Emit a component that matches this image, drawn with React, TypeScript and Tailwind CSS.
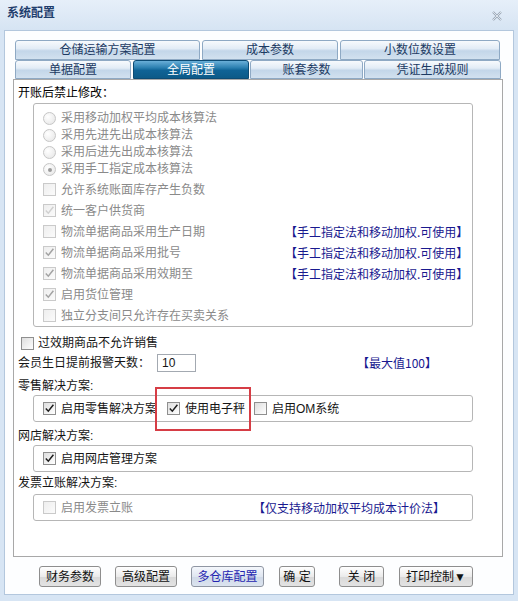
import React from "react";

const FONT = { fontFamily: '"Liberation Sans", "Noto Sans CJK SC", sans-serif' };
const CJK = { fontFamily: '"Noto Sans CJK SC", "Liberation Sans", sans-serif' };

function Check({ checked = false, disabled = false, faint = false }: { checked?: boolean; disabled?: boolean; faint?: boolean }) {
  return (
    <span
      className={
        disabled
          ? "w-[13px] h-[13px] shrink-0 border border-[#cacaca] bg-[linear-gradient(135deg,#eeeeee,#fbfbfb)] flex items-center justify-center"
          : "w-[13px] h-[13px] shrink-0 border border-[#8f8f8f] bg-[linear-gradient(135deg,#dedede,#ffffff)] flex items-center justify-center"
      }
    >
      {checked && (
        <svg width="11" height="11" viewBox="0 0 11 11">
          <path
            d="M1.8 5.6 L4.3 8.2 L9.4 1.8"
            fill="none"
            stroke={faint ? "#d0d0d0" : disabled ? "#a3a3a3" : "#1d1d1d"}
            strokeWidth="1.5"
          />
        </svg>
      )}
    </span>
  );
}

function Radio({ checked = false }: { checked?: boolean }) {
  return (
    <span className="w-[13px] h-[13px] shrink-0 rounded-full border border-[#c6c6c6] bg-[radial-gradient(circle_at_35%_35%,#ffffff,#e4e4e4)] flex items-center justify-center">
      {checked && <span className="w-[4px] h-[4px] rounded-full bg-[#9c9c9c]" />}
    </span>
  );
}

const NOTE = "【手工指定法和移动加权.可使用】";

function Tab({ label, w, active = false, h }: { label: string; w: number; active?: boolean; h: string }) {
  return (
    <div
      style={{ width: w }}
      className={
        active
          ? `${h} shrink-0 flex items-center justify-center rounded-t-[3px] border border-[#0c4b74] bg-[linear-gradient(to_bottom,#6aafd8_0%,#2a7fb0_40%,#0f6396_55%,#0c5a88_100%)] text-white text-[12px]`
          : `${h} shrink-0 flex items-center justify-center rounded-t-[3px] border border-[#8ea9c4] bg-[linear-gradient(to_bottom,#f7fafd_0%,#e2ecf6_42%,#c3d6e9_55%,#d2e1ef_100%)] text-[#1c3a62] text-[12px]`
      }
    >
      {label}
    </div>
  );
}

function Btn({ label, w, ml, blue = false }: { label: string; w: number; ml: number; blue?: boolean }) {
  return (
    <div
      style={{ width: w, marginLeft: ml }}
      className={
        blue
          ? "h-[21px] shrink-0 flex items-center justify-center rounded-[3px] border border-[#8f96a3] bg-[linear-gradient(to_bottom,#f4f7fc,#dfe6f1_50%,#cfd9e8_52%,#dce4ef)] text-[12px] text-[#2424b0]"
          : "h-[21px] shrink-0 flex items-center justify-center rounded-[3px] border border-[#8e8e8e] bg-[linear-gradient(to_bottom,#ffffff,#ebebeb_50%,#d9d9d9_52%,#e3e3e3)] text-[12px] text-[#111111]"
      }
    >
      {label}
    </div>
  );
}

export default function App() {
  return (
    <div style={FONT} className="w-[518px] h-[601px] bg-[#d7e5f4] flex flex-col text-[12px] text-[#151515] overflow-hidden">
      {/* title bar */}
      <div className="h-[30px] shrink-0 flex items-center justify-between pl-[7px] pr-[16px] bg-[linear-gradient(to_bottom,#e6eff9,#d6e4f3)]">
        <span className="font-bold text-[12px] text-[#1e3d6c] -mt-[4px]">系统配置</span>
        <svg width="10" height="10" viewBox="0 0 10 10" className="mt-[2px]">
          <path d="M1 1 L9 9 M9 1 L1 9" stroke="#9aa7b6" strokeWidth="2.2" />
          <path d="M1 1 L9 9 M9 1 L1 9" stroke="#eef3f8" strokeWidth="0.8" />
        </svg>
      </div>

      {/* panel */}
      <div className="mx-[4px] h-[565px] shrink-0 border border-[#b3c7dd] bg-[#fdfeff] flex flex-col">
        {/* tabs */}
        <div className="ml-[10px] mt-[9px] flex gap-[2px]">
          <Tab h="h-[20px]" label="仓储运输方案配置" w={185} />
          <Tab h="h-[20px]" label="成本参数" w={136} />
          <Tab h="h-[20px]" label="小数位数设置" w={160} />
        </div>
        <div className="ml-[10px] flex">
          <Tab h="h-[19px]" label="单据配置" w={116} />
          <div className="w-[2px]" />
          <Tab h="h-[19px]" label="全局配置" w={116} active />
          <div className="w-[1px]" />
          <Tab h="h-[19px]" label="账套参数" w={113} />
          <div className="w-[1px]" />
          <Tab h="h-[19px]" label="凭证生成规则" w={137} />
        </div>

        {/* content box */}
        <div className="ml-[8px] w-[490px] h-[478px] shrink-0 border border-[#a8a8a8] bg-white flex flex-col">
          <div className="mt-[5px] pl-[4px] h-[17px] leading-[17px] text-[#000]">开账后禁止修改：</div>

          <div className="mt-[1px] ml-[19px] w-[440px] border border-[#b6b6b6] rounded-[3px] pt-[6px] pl-[9px] text-[#8a8a8a]">
            {[
              ["采用移动加权平均成本核算法", false],
              ["采用先进先出成本核算法", false],
              ["采用后进先出成本核算法", false],
              ["采用手工指定成本核算法", true],
            ].map(([t, c]) => (
              <div key={t as string} className="h-[17px] flex items-center gap-[5px]">
                <Radio checked={c as boolean} />
                <span className="leading-[17px]">{t as string}</span>
              </div>
            ))}
            <div className="h-[21px] flex items-center gap-[5px] mt-[1px]">
              <Check disabled />
              <span>允许系统账面库存产生负数</span>
            </div>
            <div className="h-[21px] flex items-center gap-[5px]">
              <Check disabled checked faint />
              <span>统一客户供货商</span>
            </div>
            <div className="h-[21px] flex items-center gap-[5px]">
              <Check disabled />
              <span className="w-[219px] shrink-0">物流单据商品采用生产日期</span>
              <span style={CJK} className="text-[#19198f]">{NOTE}</span>
            </div>
            <div className="h-[21px] flex items-center gap-[5px]">
              <Check disabled checked />
              <span className="w-[219px] shrink-0">物流单据商品采用批号</span>
              <span style={CJK} className="text-[#19198f]">{NOTE}</span>
            </div>
            <div className="h-[21px] flex items-center gap-[5px]">
              <Check disabled checked />
              <span className="w-[219px] shrink-0">物流单据商品采用效期至</span>
              <span style={CJK} className="text-[#19198f]">{NOTE}</span>
            </div>
            <div className="h-[21px] flex items-center gap-[5px]">
              <Check disabled checked />
              <span>启用货位管理</span>
            </div>
            <div className="h-[21px] flex items-center gap-[5px]">
              <Check disabled />
              <span>独立分支间只允许存在买卖关系</span>
            </div>
          </div>

          <div className="mt-[6px] pl-[7px] h-[20px] flex items-center gap-[4px]">
            <Check />
            <span>过效期商品不允许销售</span>
          </div>

          <div className="pl-[4px] h-[20px] flex items-center">
            <span className="w-[139px] shrink-0">会员生日提前报警天数：</span>
            <div className="w-[39px] h-[18px] shrink-0 border border-[#a3a9b1] bg-white pl-[4px] leading-[16px] text-[12px]">10</div>
            <span style={CJK} className="ml-[161px] text-[#19198f]">【最大值100】</span>
          </div>

          <div className="mt-[5px] pl-[4px] h-[17px] leading-[17px]">零售解决方案:</div>
          <div className="relative ml-[19px] w-[440px] h-[27px] shrink-0 border border-[#b6b6b6] rounded-[3px] pl-[9px] flex items-center">
            <Check checked />
            <span className="ml-[5px] w-[106px] shrink-0">启用零售解决方案</span>
            <Check checked />
            <span className="ml-[5px] w-[69px] shrink-0">使用电子秤</span>
            <Check />
            <span className="ml-[5px]">启用OM系统</span>
            <div className="absolute left-[121px] -top-[9px] w-[96px] h-[44px] border-2 border-[#d63d45]" />
          </div>

          <div className="mt-[6px] pl-[4px] h-[17px] leading-[17px]">网店解决方案:</div>
          <div className="ml-[19px] w-[440px] h-[27px] shrink-0 border border-[#b6b6b6] rounded-[3px] pl-[9px] flex items-center">
            <Check checked />
            <span className="ml-[5px]">启用网店管理方案</span>
          </div>

          <div className="mt-[3px] pl-[4px] h-[17px] leading-[17px]">发票立账解决方案:</div>
          <div className="mt-[2px] ml-[19px] w-[440px] h-[27px] shrink-0 border border-[#b6b6b6] rounded-[3px] pl-[9px] flex items-center">
            <Check disabled />
            <span className="ml-[5px] w-[192px] shrink-0 text-[#8a8a8a]">启用发票立账</span>
            <span style={CJK} className="text-[#19198f]">【仅支持移动加权平均成本计价法】</span>
          </div>
        </div>

        {/* buttons */}
        <div className="mt-[9px] flex">
          <Btn label="财务参数" w={62} ml={34} />
          <Btn label="高级配置" w={62} ml={14} />
          <Btn label="多仓库配置" w={73} ml={14} blue />
          <Btn label="确 定" w={36} ml={15} />
          <Btn label="关 闭" w={45} ml={24} />
          <Btn label="打印控制▼" w={74} ml={15} />
        </div>
      </div>
    </div>
  );
}
